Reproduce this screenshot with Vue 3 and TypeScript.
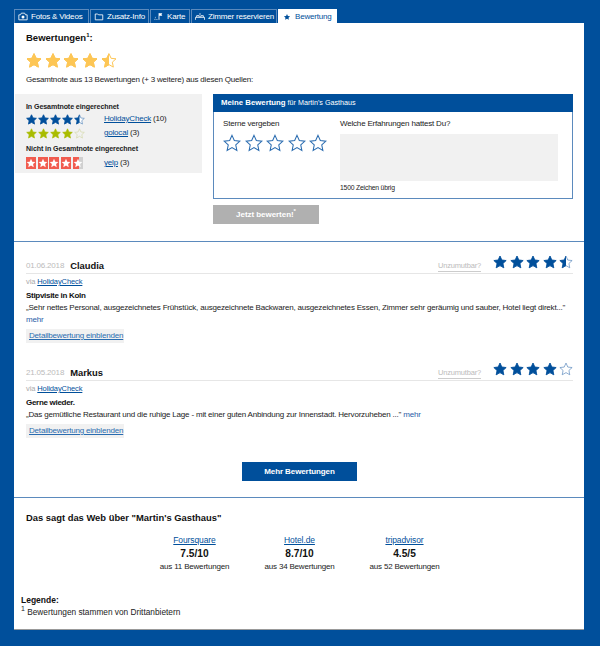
<template>
  <div class="page">
    <nav class="tabs">
      <a v-for="tab in tabs" :key="tab.label" class="tab" :class="{ active: tab.active }" :style="{ width: tab.width + 'px' }">
        <svg class="tab-icon" viewBox="0 0 12 10" v-html="tab.icon"></svg>
        {{ tab.label }}
      </a>
    </nav>

    <main class="panel">
      <section class="summary">
        <h1 class="title">Bewertungen<sup>1</sup>:</h1>
        <div class="stars big-stars">
          <svg v-for="n in 5" :key="n" viewBox="0 0 24 24">
            <path :d="STAR" fill="#fff" stroke="#fdc655" stroke-width="1.5" />
            <path :d="STAR" fill="#fdc655" stroke="#fdc655" stroke-width="1.5" :class="{ half: n === 5 }" />
          </svg>
        </div>
        <p class="note">Gesamtnote aus 13 Bewertungen (+ 3 weitere) aus diesen Quellen:</p>

        <div class="columns">
          <aside class="sources">
            <h3>In Gesamtnote eingerechnet</h3>
            <div class="source">
              <div class="stars small-stars">
                <svg v-for="n in 5" :key="n" viewBox="0 0 24 24">
                  <path :d="STAR" fill="#fff" stroke="#5b8abd" stroke-width="1.5" />
                  <path :d="STAR" fill="#004f9b" stroke="#004f9b" stroke-width="1.5" :class="{ half: n === 5 }" />
                </svg>
              </div>
              <span><a class="link">HolidayCheck</a> (10)</span>
            </div>
            <div class="source">
              <div class="stars small-stars">
                <svg v-for="n in 5" :key="n" viewBox="0 0 24 24">
                  <path :d="STAR" :fill="n < 5 ? '#a9bc00' : '#f1f1f1'" :stroke="n < 5 ? '#a9bc00' : '#d5d9aa'" stroke-width="1.5" />
                </svg>
              </div>
              <span><a class="link">golocal</a> (3)</span>
            </div>
            <h3 class="second">Nicht in Gesamtnote eingerechnet</h3>
            <div class="source">
              <div class="yelp">
                <i v-for="n in 5" :key="n" :class="{ half: n === 5 }">
                  <svg viewBox="0 0 24 24" width="10" height="10"><path :d="STAR" fill="#fff" /></svg>
                </i>
              </div>
              <span><a class="link">yelp</a> (3)</span>
            </div>
          </aside>

          <div class="mine">
            <div class="mine-box">
              <div class="mine-head"><b>Meine Bewertung</b> für Martin's Gasthaus</div>
              <div class="mine-body">
                <div class="give">
                  <div>Sterne vergeben</div>
                  <div class="stars give-stars">
                    <svg v-for="n in 5" :key="n" viewBox="0 0 24 24">
                      <path :d="STAR" fill="#fff" stroke="#2a6cb0" stroke-width="1.4" />
                    </svg>
                  </div>
                </div>
                <div class="exp">
                  <div>Welche Erfahrungen hattest Du?</div>
                  <div class="textarea"></div>
                  <div class="count">1500 Zeichen übrig</div>
                </div>
              </div>
            </div>
            <div class="submit">Jetzt bewerten!<sup>*</sup></div>
          </div>
        </div>
      </section>

      <section class="reviews">
        <article v-for="r in reviews" :key="r.name" class="review">
          <header class="review-head">
            <span class="date">{{ r.date }}</span>
            <span class="name">{{ r.name }}</span>
            <a class="report">Unzumutbar?</a>
            <div class="stars review-stars">
              <svg v-for="n in 5" :key="n" viewBox="0 0 24 24">
                <path :d="STAR" fill="#fff" stroke="#5b8abd" stroke-width="1.2" />
                <path v-if="n <= r.full" :d="STAR" fill="#004f9b" stroke="#004f9b" stroke-width="1.2" />
                <path v-else-if="n === r.full + 1 && r.half" :d="STAR" fill="#004f9b" stroke="#004f9b" stroke-width="1.2" class="half" />
              </svg>
            </div>
          </header>
          <div class="via">via <a class="link">HolidayCheck</a></div>
          <h4 class="review-title">{{ r.title }}</h4>
          <p class="review-text">{{ r.text }} <a class="more">mehr</a></p>
          <a class="detail">Detailbewertung einblenden</a>
        </article>
        <div class="more-row"><div class="more-btn">Mehr Bewertungen</div></div>
      </section>

      <section class="web">
        <h2>Das sagt das Web über "Martin's Gasthaus"</h2>
        <div class="web-grid">
          <div v-for="s in sites" :key="s.name" class="site">
            <a class="link">{{ s.name }}</a>
            <strong>{{ s.score }}</strong>
            <span>{{ s.count }}</span>
          </div>
        </div>
      </section>

      <footer class="legend">
        <b>Legende:</b>
        <div><sup>1</sup> Bewertungen stammen von Drittanbietern</div>
      </footer>
    </main>
  </div>
</template>

<script setup lang="ts">
const STAR = 'M12 1.8l3.1 6.9 7.4.8-5.5 5 1.5 7.4L12 18.2l-6.5 3.7L7 14.5l-5.5-5 7.4-.8z'

const tabs = [
  {
    label: 'Fotos & Videos',
    width: 75,
    icon: '<path d="M1 3h2l1-2h4l1 2h2v6H1z" fill="none" stroke="#fff"/><circle cx="6" cy="5.5" r="1.8" fill="#fff"/>',
  },
  {
    label: 'Zusatz-Info',
    width: 59,
    icon: '<path d="M1.5 2h3l1 1h5v6h-9z" fill="none" stroke="#fff"/>',
  },
  {
    label: 'Karte',
    width: 40,
    icon: '<path d="M6 1v8" stroke="#fff"/><path d="M6 1h4l-1 1.500 1 1.500H6z" fill="#fff"/><path d="M1 9l1-4M3.500 9V7" stroke="#fff" stroke-dasharray="1 1"/>',
  },
  {
    label: 'Zimmer reservieren',
    width: 86,
    icon: '<path d="M0.500 9V6h11v3M2 6V4h3v2M7 6V4h3v2M5 2h2" fill="none" stroke="#fff"/>',
  },
  {
    label: 'Bewertung',
    width: 59,
    active: true,
    icon: '<path d="M6 2l1.100 2.400 2.600.3-1.900 1.700.5 2.600L6 7.700 3.700 9l.5-2.600-1.900-1.700 2.600-.3z" fill="#004f9b"/>',
  },
]

const reviews = [
  {
    date: '01.06.2018',
    name: 'Claudia',
    full: 4,
    half: true,
    title: 'Stipvisite in Koln',
    text: '„Sehr nettes Personal, ausgezeichnetes Frühstück, ausgezeichnete Backwaren, ausgezeichnetes Essen, Zimmer sehr geräumig und sauber, Hotel liegt direkt..."',
  },
  {
    date: '21.05.2018',
    name: 'Markus',
    full: 4,
    half: false,
    title: 'Gerne wieder.',
    text: '„Das gemütliche Restaurant und die ruhige Lage - mit einer guten Anbindung zur Innenstadt. Hervorzuheben ..."',
  },
]

const sites = [
  { name: 'Foursquare', score: '7.5/10', count: 'aus 11 Bewertungen' },
  { name: 'Hotel.de', score: '8.7/10', count: 'aus 34 Bewertungen' },
  { name: 'tripadvisor', score: '4.5/5', count: 'aus 52 Bewertungen' },
]
</script>

<style>
html,
body {
  margin: 0;
  background: #004f9b;
}
</style>

<style scoped>
.page {
  width: 600px;
  height: 646px;
  overflow: hidden;
  box-sizing: border-box;
  padding: 9px 16px 0 14px;
  background: #004f9b;
  font-family: 'Liberation Sans', Arial, sans-serif;
  font-size: 8px;
  letter-spacing: -0.19px;
  line-height: 12px;
  color: #222;
}

h1, h2, h3, h4, p {
  margin: 0;
}

sup {
  font-size: 6px;
  line-height: 0;
}

.link {
  color: #004f9b;
  text-decoration: underline;
}

.half {
  clip-path: inset(0 50% 0 0);
}

/* tabs */
.tabs {
  display: flex;
  gap: 1px;
  height: 14px;
}

.tab {
  box-sizing: border-box;
  display: flex;
  align-items: center;
  gap: 3px;
  padding-left: 3px;
  color: #fff;
  border: 1px solid #5b8abd;
  border-bottom: 0;
  white-space: nowrap;
}

.tab.active {
  background: #fff;
  border-color: #fff;
  color: #004f9b;
}

.tab-icon {
  flex: none;
  width: 10px;
  height: 9px;
}

.panel {
  width: 570px;
  height: 607px;
  box-sizing: border-box;
  background: #fff;
  border-bottom: 1px solid #999;
}

/* summary */
.summary {
  height: 219px;
  box-sizing: border-box;
  padding: 9px 11px 0 1px;
  border-bottom: 1px solid #5b8abd;
}

.title {
  margin-left: 11px;
  font-size: 9.5px;
  letter-spacing: 0;
  line-height: 12px;
  color: #111;
}

.stars {
  display: flex;
}

.big-stars {
  gap: 2.7px;
  margin: 8px 0 0 11px;
}

.big-stars svg {
  width: 16px;
  height: 17px;
}

.note {
  margin: 5px 0 0 11px;
}

.columns {
  display: flex;
  gap: 11px;
  margin-top: 8px;
}

.sources {
  width: 187px;
  height: 79px;
  box-sizing: border-box;
  padding: 8px 0 0 11px;
  background: #f1f1f1;
}

.sources h3 {
  font-size: 7.1px;
  letter-spacing: -0.1px;
  line-height: 10px;
  color: #222;
}

.sources h3.second {
  margin-top: 4px;
}

.source {
  display: flex;
  align-items: center;
  height: 14px;
}

.second + .source {
  margin-top: 2px;
}

.source > span {
  margin-left: 5px;
}

.small-stars {
  width: 73px;
  gap: 1px;
}

.small-stars svg {
  width: 11px;
  height: 11px;
}

.yelp {
  display: flex;
  gap: 1.7px;
  width: 73px;
}

.yelp i {
  display: flex;
  align-items: center;
  justify-content: center;
  width: 10px;
  height: 12px;
  background: #f15c4f;
}

.yelp i.half {
  clip-path: none;
  background: linear-gradient(90deg, #f15c4f 55%, #d0d0d0 55%);
}

.mine {
  width: 360px;
}

.mine-box {
  height: 105px;
  box-sizing: border-box;
  border: 1px solid #5b8abd;
  border-top: 0;
}

.mine-head {
  height: 18px;
  margin: 0 -1px;
  padding-left: 8px;
  background: #004f9b;
  color: #fff;
  font-size: 7.2px;
  letter-spacing: 0;
  line-height: 18px;
}

.mine-head b {
  font-size: 7.8px;
}

.mine-body {
  display: flex;
  padding: 6px 0 0 9px;
}

.give {
  width: 117px;
}

.give-stars {
  gap: 3.5px;
  margin-top: 4px;
}

.give-stars svg {
  width: 18px;
  height: 18px;
}

.exp {
  width: 218px;
}

.textarea {
  height: 47px;
  margin-top: 4px;
  background: #f1f1f1;
}

.count {
  margin-top: 1px;
  font-size: 6.8px;
  line-height: 12px;
}

.submit {
  width: 106px;
  height: 19px;
  margin-top: 6px;
  background: #b0b0b0;
  color: #fff;
  font-weight: 700;
  letter-spacing: -0.05px;
  line-height: 19px;
  text-align: center;
}

/* reviews */
.reviews {
  height: 256px;
  box-sizing: border-box;
  padding: 15px 11px 0 12px;
  border-bottom: 1px solid #5b8abd;
}

.review {
  margin-bottom: 21px;
}

.review-head {
  display: flex;
  align-items: center;
  height: 17px;
  box-sizing: border-box;
  padding-top: 2px;
  border-bottom: 1px solid #e6e6e6;
}

.date {
  color: #bbb;
}

.name {
  margin-left: 6px;
  font-size: 9.4px;
  letter-spacing: 0;
  font-weight: 700;
  color: #111;
}

.report {
  margin-left: auto;
  font-size: 7.5px;
  color: #bbb;
  border-bottom: 1px solid #ccc;
  line-height: 10px;
}

.review-stars {
  gap: 2.5px;
  margin: 0 0 8px 12px;
}

.review-stars svg {
  width: 14px;
  height: 14px;
}

.via {
  margin-top: 2px;
  color: #aaa;
  font-size: 7.5px;
  letter-spacing: -0.1px;
}

.review-title {
  margin-top: 2px;
  letter-spacing: -0.3px;
  line-height: 12px;
  color: #111;
}

.review-text {
  line-height: 12px;
}

.more {
  color: #2a5ea8;
}

.detail {
  display: block;
  width: 98px;
  height: 14px;
  box-sizing: border-box;
  margin-top: 3px;
  padding: 1px 3px;
  background: #f1f1f1;
  color: #2a6cb0;
  text-decoration: underline;
  white-space: nowrap;
}

.more-row {
  display: flex;
  justify-content: center;
  margin-top: 24px;
}

.more-btn {
  width: 115px;
  height: 19px;
  background: #004f9b;
  color: #fff;
  font-weight: 700;
  letter-spacing: -0.1px;
  line-height: 19px;
  text-align: center;
}

/* web */
.web {
  padding: 14px 0 0 12px;
}

.web h2 {
  font-size: 9.4px;
  letter-spacing: 0;
  line-height: 12px;
  color: #111;
}

.web-grid {
  display: flex;
  margin: 10px 0 0 116px;
}

.site {
  display: flex;
  flex-direction: column;
  align-items: center;
  width: 105px;
}

.site .link {
  font-size: 8.5px;
  letter-spacing: -0.1px;
}

.site strong {
  font-size: 10.2px;
  letter-spacing: 0;
  line-height: 15px;
  color: #111;
}

.site span {
  line-height: 12px;
}

.legend {
  margin: 21px 0 0 7px;
  font-size: 8.3px;
  letter-spacing: 0;
  color: #222;
}

.legend sup {
  font-size: 7px;
}

.legend b {
  display: block;
  font-size: 8.5px;
  color: #111;
}
</style>
